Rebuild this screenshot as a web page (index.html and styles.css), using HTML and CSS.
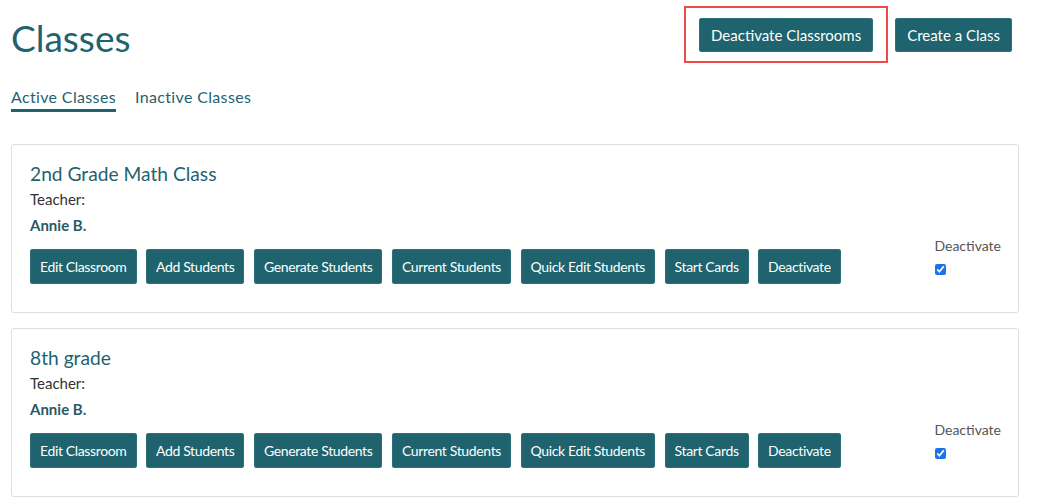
FILE: index.html
```html
<!DOCTYPE html>
<html>
<head>
<meta charset="utf-8">
<link rel="stylesheet" href="styles.css">
</head>
<body>
<div class="page">
  <header class="top">
    <div class="title-block">
      <h1 class="title">Classes</h1>
      <nav class="tabs">
        <a class="tab active">Active Classes</a>
        <a class="tab">Inactive Classes</a>
      </nav>
    </div>
    <div class="actions">
      <button class="btn btn-lg highlight">Deactivate Classrooms</button>
      <button class="btn btn-lg">Create a Class</button>
    </div>
  </header>

  <section class="card">
    <div class="card-main">
      <h2 class="card-title">2nd Grade Math Class</h2>
      <div class="teacher-label">Teacher:</div>
      <div class="teacher-name">Annie B.</div>
      <div class="btn-row">
        <button class="btn">Edit Classroom</button>
        <button class="btn">Add Students</button>
        <button class="btn">Generate Students</button>
        <button class="btn">Current Students</button>
        <button class="btn">Quick Edit Students</button>
        <button class="btn">Start Cards</button>
        <button class="btn">Deactivate</button>
      </div>
    </div>
    <label class="deact">
      <span>Deactivate</span>
      <input type="checkbox" checked>
    </label>
  </section>

  <section class="card">
    <div class="card-main">
      <h2 class="card-title">8th grade</h2>
      <div class="teacher-label">Teacher:</div>
      <div class="teacher-name">Annie B.</div>
      <div class="btn-row">
        <button class="btn">Edit Classroom</button>
        <button class="btn">Add Students</button>
        <button class="btn">Generate Students</button>
        <button class="btn">Current Students</button>
        <button class="btn">Quick Edit Students</button>
        <button class="btn">Start Cards</button>
        <button class="btn">Deactivate</button>
      </div>
    </div>
    <label class="deact">
      <span>Deactivate</span>
      <input type="checkbox" checked>
    </label>
  </section>
</div>
</body>
</html>
```

FILE: styles.css
```css
* { box-sizing: border-box; }
html, body { margin: 0; padding: 0; background: #fff; }
body {
  font-family: Lato, "Open Sans", sans-serif;
  color: #333;
}
.page {
  padding: 0 21px 0 11px;
}
.top {
  display: flex;
  justify-content: space-between;
  align-items: flex-start;
}
.title {
  margin: 0;
  padding-top: 15px;
  font-size: 37px;
  font-weight: 400;
  color: #1e636e;
  line-height: 46px;
}
.tabs {
  display: flex;
  gap: 19px;
  margin-top: 26px;
}
.tab {
  font-size: 16px;
  color: #1e636e;
  line-height: 20px;
  padding-bottom: 2px;
  border-bottom: 3px solid transparent;
  letter-spacing: 0.35px;
}
.tab.active { border-bottom-color: #1e636e; }
.actions {
  display: flex;
  gap: 22px;
  margin-top: 18px;
  margin-right: 7px;
  position: relative;
}
.btn {
  font-family: Lato, sans-serif;
  background: #1e636e;
  color: #fff;
  border: none;
  border-radius: 3px;
  font-size: 14px;
  letter-spacing: -0.36px;
  height: 35px;
  padding: 0 10px;
  cursor: pointer;
  box-shadow: 0 0 0 0.5px #3d7c86 inset;
}
.btn-lg {
  height: 34px;
  padding: 0 12px;
  font-size: 15px;
  letter-spacing: 0;
}
.highlight { position: relative; }
.highlight::after {
  content: "";
  position: absolute;
  left: -15px;
  top: -12px;
  right: -15px;
  bottom: -11px;
  border: 2px solid #ef4a4a;
}
.card {
  margin-top: 15px;
  border: 1px solid #dedede;
  border-radius: 3px;
  padding: 15px 18px 28px 18px;
  display: flex;
  justify-content: space-between;
  align-items: flex-end;
}
.top + .card { margin-top: 32px; }
.card-title {
  margin: 0;
  font-size: 19.2px;
  font-weight: 400;
  color: #1e636e;
  line-height: 28px;
}
.teacher-label {
  font-size: 15px;
  line-height: 20px;
  margin-top: 1px;
  color: #333;
}
.teacher-name {
  font-size: 15px;
  font-weight: 700;
  color: #2b5965;
  line-height: 20px;
  margin-top: 6px;
}
.btn-row {
  display: flex;
  gap: 9.5px;
  margin-top: 14px;
}
.deact {
  display: flex;
  flex-direction: column;
  align-items: flex-start;
  font-size: 14px;
  color: #555;
  margin-right: -1px;
  margin-bottom: 9px;
}
.deact input {
  margin: 10px 0 0 1px;
  width: 11px;
  height: 11px;
  accent-color: #1a73e8;
}
```
